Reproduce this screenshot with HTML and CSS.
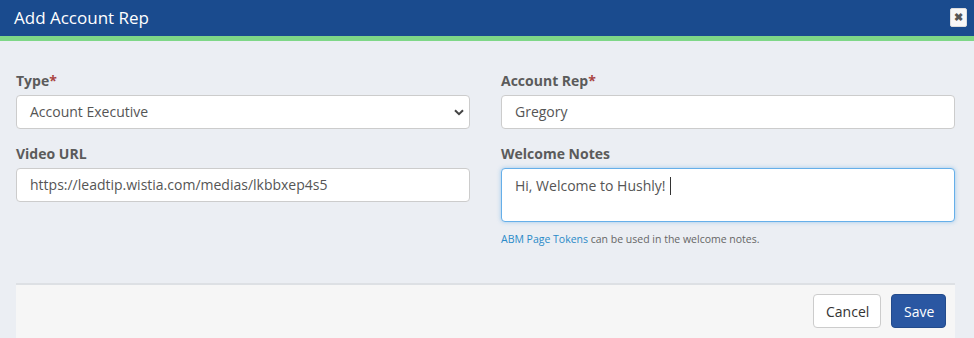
FILE: index.html
```html
<!DOCTYPE html>
<html lang="en">
<head>
    <meta charset="UTF-8">
    <meta name="viewport" content="width=device-width, initial-scale=1.0">
    <title>Add Account Rep</title>
    <link rel="stylesheet" href="styles.css">
</head>
<body>
    <div class="modal">
        <div class="modal-header">
            <h1>Add Account Rep</h1>
            <button class="close-btn" type="button">&#10006;</button>
        </div>

        <div class="modal-body">
            <div class="form-grid">
                <div class="form-col">
                    <div class="form-group">
                        <label>Type<span class="req">*</span></label>
                        <div class="select-wrap">
                            <div class="form-control select">Account Executive</div>
                            <svg class="caret" width="10" height="7" viewBox="0 0 10 7"><path d="M1 1.2 L5 5.2 L9 1.2" fill="none" stroke="#444" stroke-width="2"/></svg>
                        </div>
                    </div>
                    <div class="form-group">
                        <label>Video URL</label>
                        <div class="form-control">https://leadtip.wistia.com/medias/lkbbxep4s5</div>
                    </div>
                </div>

                <div class="form-col">
                    <div class="form-group">
                        <label>Account Rep<span class="req">*</span></label>
                        <div class="form-control">Gregory</div>
                    </div>
                    <div class="form-group">
                        <label>Welcome Notes</label>
                        <div class="form-control textarea focused">Hi, Welcome to Hushly!<span class="cursor"></span></div>
                        <p class="help-text"><a href="#">ABM Page Tokens</a> can be used in the welcome notes.</p>
                    </div>
                </div>
            </div>
        </div>

        <div class="modal-footer">
            <button class="btn btn-default" type="button">Cancel</button>
            <button class="btn btn-primary" type="button">Save</button>
        </div>
    </div>
</body>
</html>
```

FILE: styles.css
```css
* {
    margin: 0;
    padding: 0;
    box-sizing: border-box;
}

body {
    font-family: 'Open Sans', 'Liberation Sans', sans-serif;
    background-color: #ebeef3;
    color: #555;
    width: 974px;
    height: 338px;
    overflow: hidden;
}

.modal {
    display: flex;
    flex-direction: column;
    height: 338px;
}

.modal-header {
    background: #1a4b8e;
    border-bottom: 5px solid #7ed787;
    height: 41px;
    display: flex;
    justify-content: space-between;
    align-items: flex-start;
    padding: 0 7px 0 14px;
}

.modal-header h1 {
    color: #fff;
    font-size: 17px;
    font-weight: 400;
    line-height: 35px;
}

.close-btn {
    margin-top: 8px;
    width: 17px;
    height: 19px;
    background: #f7f7f7;
    border: 1px solid #ddd;
    border-radius: 2px;
    color: #555;
    font-size: 11px;
    line-height: 17px;
    font-weight: bold;
    cursor: pointer;
}

.modal-body {
    padding: 31px 19px 0 16px;
    flex: 1;
}

.form-grid {
    display: grid;
    grid-template-columns: 454px 454px;
    column-gap: 31px;
}

.form-group {
    margin-bottom: 16px;
}

.form-group label {
    display: block;
    font-size: 14px;
    font-weight: 700;
    color: #5b5b5b;
    line-height: 18px;
    margin-bottom: 5px;
}

.req {
    color: #a94442;
}

.form-control {
    height: 34px;
    background: #fff;
    border: 1px solid #ccc;
    border-radius: 4px;
    padding: 0 13px;
    font-size: 14px;
    line-height: 32px;
    color: #555;
}

.select-wrap {
    position: relative;
}

.caret {
    position: absolute;
    right: 6px;
    top: 14px;
}

.textarea {
    height: 54px;
    line-height: 34px;
}

.focused {
    border-color: #66afe9;
    box-shadow: 0 0 4px rgba(102, 175, 233, 0.6);
}

.cursor {
    display: inline-block;
    width: 1px;
    height: 18px;
    background: #333;
    margin-left: 4px;
    vertical-align: -4px;
}

.help-text {
    font-size: 10.5px;
    color: #666;
    margin-top: 10px;
}

.help-text a {
    color: #2a8ac8;
    text-decoration: none;
}

.modal-footer {
    margin: 0 19px 0 16px;
    background: #f6f6f6;
    border-top: 2px solid #dde0e4;
    height: 55px;
    display: flex;
    justify-content: flex-end;
    align-items: flex-start;
    gap: 10px;
    padding: 9px 9px 0 0;
}

.btn {
    height: 34px;
    border-radius: 4px;
    font-family: inherit;
    font-size: 14px;
    padding: 0 12px;
    cursor: pointer;
}

.btn-default {
    background: #fff;
    border: 1px solid #ccc;
    color: #333;
    width: 68px;
}

.btn-primary {
    background: #2a57a2;
    border: 1px solid #234b8c;
    color: #fff;
    width: 55px;
}
```
